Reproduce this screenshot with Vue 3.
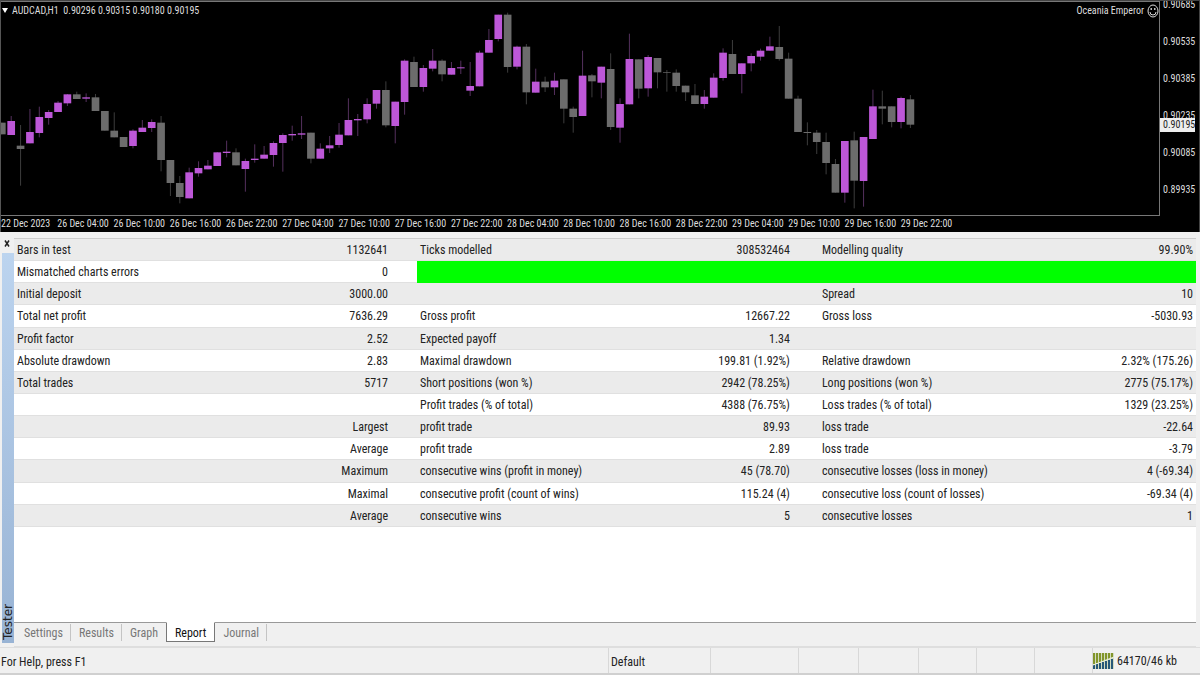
<script setup>
// Candle rows: direction (u/d), wick top, body top, body bottom, wick bottom
const source = `d 368 368 403 403|u 348 363 405 405|d 375 437 447 557|u 327 396 430 430|u 320 351 399 412|u 330 336 354 374|u 303 308 336 336|u 282 283 310 318|d 275 283 297 297|u 280 292 296 306|d 282 292 333 333|d 333 333 392 392|d 337 392 412 412|d 411 411 441 441|u 388 392 438 445|u 360 383 396 396|u 358 366 384 396|d 348 368 480 514|d 480 480 549 588|d 528 549 591 610|u 503 517 595 595|u 484 504 520 530|u 480 497 508 508|u 456 457 498 498|u 422 455 459 472|d 445 457 496 496|u 476 483 507 575|u 433 476 480 488|u 438 464 476 476|u 424 429 465 500|u 400 405 429 515|u 377 402 406 422|u 348 400 404 417|d 398 398 476 490|u 430 446 476 476|u 408 436 445 459|u 369 404 435 443|u 295 360 406 406|u 342 357 361 408|u 295 312 358 370|u 270 270 311 326|d 244 270 376 382|u 305 305 378 430|u 178 182 306 344|d 170 186 261 261|u 195 204 261 275|u 147 182 206 214|d 178 182 223 244|u 186 204 224 224|u 182 202 205 222|u 186 258 272 288|u 152 158 259 259|u 87 120 158 158|u 44 44 117 124|d 38 44 201 218|u 137 140 200 208|d 132 140 277 313|u 206 245 278 278|d 230 245 262 276|u 218 242 262 285|d 238 238 326 370|d 320 326 351 398|u 152 227 348 348|d 222 226 244 292|u 200 200 248 295|d 160 207 381 390|u 295 312 383 428|u 101 177 313 313|d 178 178 266 295|u 165 171 265 290|d 174 174 217 265|d 210 216 218 275|d 208 218 258 275|d 257 257 277 303|d 252 286 312 312|u 270 290 312 326|u 220 233 293 293|u 145 158 234 242|d 120 162 222 222|u 190 190 222 280|u 160 168 190 214|u 146 152 170 182|u 110 139 152 152|d 78 141 177 182|d 158 176 296 296|d 287 296 396 396|d 367 396 399 436|d 390 398 426 462|d 398 426 489 523|d 477 492 578 578|u 423 423 578 608|d 395 421 542 625|u 411 411 543 620|u 269 319 417 417|d 272 319 326 373|d 319 319 366 382|u 290 294 366 385|d 285 298 374 384`

const candles = source.split('|').map((row, i) => {
  const [dir, ...n] = row.split(' ')
  const [high, top, bottom, low] = n.map(Number)
  return { x: 5 + i * 28.1, dir, high, top, bottom, low }
})

const times = [
  '22 Dec 2023', '26 Dec 04:00', '26 Dec 10:00', '26 Dec 16:00', '26 Dec 22:00', '27 Dec 04:00',
  '27 Dec 10:00', '27 Dec 16:00', '27 Dec 22:00', '28 Dec 04:00', '28 Dec 10:00', '28 Dec 16:00',
  '28 Dec 22:00', '29 Dec 04:00', '29 Dec 10:00', '29 Dec 16:00', '29 Dec 22:00',
]
const prices = ['0.90685', '0.90535', '0.90385', '0.90235', '0.90085', '0.89935']

const rows = [
  ['Bars in test', '1132641', 'Ticks modelled', '308532464', 'Modelling quality', '99.90%'],
  ['Mismatched charts errors', '0'],
  ['Initial deposit', '3000.00', '', '', 'Spread', '10'],
  ['Total net profit', '7636.29', 'Gross profit', '12667.22', 'Gross loss', '-5030.93'],
  ['Profit factor', '2.52', 'Expected payoff', '1.34', '', ''],
  ['Absolute drawdown', '2.83', 'Maximal drawdown', '199.81 (1.92%)', 'Relative drawdown', '2.32% (175.26)'],
  ['Total trades', '5717', 'Short positions (won %)', '2942 (78.25%)', 'Long positions (won %)', '2775 (75.17%)'],
  ['', '', 'Profit trades (% of total)', '4388 (76.75%)', 'Loss trades (% of total)', '1329 (23.25%)'],
  ['', 'Largest', 'profit trade', '89.93', 'loss trade', '-22.64'],
  ['', 'Average', 'profit trade', '2.89', 'loss trade', '-3.79'],
  ['', 'Maximum', 'consecutive wins (profit in money)', '45 (78.70)', 'consecutive losses (loss in money)', '4 (-69.34)'],
  ['', 'Maximal', 'consecutive profit (count of wins)', '115.24 (4)', 'consecutive loss (count of losses)', '-69.34 (4)'],
  ['', 'Average', 'consecutive wins', '5', 'consecutive losses', '1'],
]
const tabs = ['Settings', 'Results', 'Graph', 'Report', 'Journal']
</script>

<template>
  <div class="terminal">
    <section class="chart">
      <div class="plot-row">
        <div class="plot">
          <svg class="candles" viewBox="3 6 3474 639" preserveAspectRatio="none">
            <g v-for="(c, i) in candles" :key="i" :class="c.dir">
              <rect class="wick" :x="c.x - 1" :y="c.high" width="3" :height="c.low - c.high" />
              <rect class="body" :x="c.x - 11" :y="c.top" width="23" :height="c.bottom - c.top" />
            </g>
          </svg>
          <header class="chart-head">
            <svg class="arrow" viewBox="0 0 6 5"><path d="M0 0h6L3 5z" fill="#fff" /></svg>
            <span>AUDCAD,H1&nbsp; 0.90296 0.90315 0.90180 0.90195</span>
            <span class="expert">Oceania Emperor</span>
            <svg class="smile" viewBox="0 0 12 14" fill="none" stroke="#ddd">
              <ellipse cx="6" cy="7" rx="5" ry="6" />
              <path d="M3 8q0 3 3 3t3-3" />
              <path d="M4.2 4v2M7.8 4v2" stroke-width="1.3" />
            </svg>
          </header>
        </div>
        <div class="scale">
          <span v-for="p in prices" :key="p" class="price">{{ p }}</span>
          <span class="current">0.90195</span>
        </div>
      </div>
      <div class="times"><span v-for="t in times" :key="t">{{ t }}</span></div>
    </section>

    <section class="tester">
      <aside class="rail">
        <button class="close" aria-label="Close">
          <svg viewBox="0 0 6 6"><path d="M1 0l4 6M5 0L1 6" stroke="#222" stroke-width="1.5" /></svg>
        </button>
        <div class="grip"><span>Tester</span></div>
      </aside>
      <div class="panel">
        <div class="report">
          <table>
            <colgroup><col class="c1"><col class="c2"><col class="c3"><col class="c4"><col class="c5"><col class="c6"></colgroup>
            <tbody>
              <tr v-for="(r, i) in rows" :key="i">
                <td v-for="(cell, j) in r" :key="j">{{ cell }}</td>
                <td v-if="r.length === 2" colspan="4" class="quality"></td>
              </tr>
            </tbody>
          </table>
        </div>
        <nav class="tabs">
          <button v-for="t in tabs" :key="t" :class="{ active: t === 'Report' }">{{ t }}</button>
          <i></i>
        </nav>
      </div>
    </section>

    <footer class="status">
      <span class="help">For Help, press F1</span>
      <span class="profile">Default</span>
      <span class="w88"></span><span class="w60"></span><span class="w60"></span><span class="w58"></span><span class="w58"></span><span class="w58"></span>
      <span class="traffic">
        <svg viewBox="0 0 21 16">
          <rect width="21" height="16" fill="#d3dbc0" />
          <g v-for="n in 7" :key="n">
            <rect :x="n * 3 - 3" y="0" width="2" :height="12 - n" fill="#82952a" />
            <rect :x="n * 3 - 3" :y="13 - n" width="2" :height="3 + n" fill="#275879" />
          </g>
          <path d="M0 12L21 4" stroke="#e9efdc" stroke-width="1" />
        </svg>
        64170/46 kb
      </span>
    </footer>
  </div>
</template>

<style>
body { background: #f0f0f0; }
</style>

<style scoped>
* { box-sizing: border-box; }
.terminal {
  display: flex; flex-direction: column; min-height: 100vh;
  font: 12px/20px "Roboto Condensed", Roboto, sans-serif; color: #222; background: #f0f0f0;
}
button { font: inherit; border: 0; background: none; padding: 0; margin: 0; }
.chart {
  background: #000; color: #ddd; font-size: 10px; line-height: 14px;
  border-top: 1px solid #444; border-left: 1px solid #555; border-right: 1px solid #444;
  height: 232px; display: flex; flex-direction: column;
}
.plot-row { display: flex; height: 215px; }
.plot { flex: 1; position: relative; border: solid #777; border-width: 1px 1px 1px 0; }
.candles { display: block; width: 100%; height: 213px; }
.d rect { fill: #6c6c6c; }
.u rect { fill: #bd57d8; }
.d .wick { fill: #3c3c3c; }
.u .wick { fill: #54305d; }
.chart-head { position: absolute; top: 0; left: 1px; right: 0; display: flex; align-items: center; height: 17px; }
.arrow { width: 6px; height: 5px; margin-right: 4px; }
.expert { margin-left: auto; }
.smile { width: 12px; height: 14px; margin-left: 3px; }
.scale { width: 39px; position: relative; display: flex; flex-direction: column; overflow: hidden; }
.price { flex: 0 0 37px; padding-left: 3px; line-height: 37px; }
.price:first-child { margin-top: -15px; }
.current { position: absolute; left: 0; top: 117px; width: 35px; line-height: 14px; padding-left: 3px; background: #eee; color: #222; }
.times { display: grid; grid-template-columns: repeat(17, 1fr); width: 79.8%; padding-top: 1px; white-space: nowrap; }
.tester { flex: 1; display: flex; padding-top: 6px; }
.rail { width: 14px; display: flex; flex-direction: column; }
.close { height: 11px; width: 13px; margin-bottom: 4px; display: flex; align-items: center; justify-content: center; }
.close svg { width: 6px; height: 7px; }
.grip { flex: 1; margin: 0 0 4px 2px; background: linear-gradient(#bcd4ef, #98b3d4); display: flex; align-items: flex-end; justify-content: center; }
.grip span { writing-mode: vertical-rl; transform: rotate(180deg); font: 12px/12px "DejaVu Sans", sans-serif; padding-top: 3px; }
.panel { flex: 1; display: flex; flex-direction: column; }
.report { flex: 1; background: #fff; border-top: 1px solid #ccc; margin-right: 4px; }
table { width: 100%; height: 288px; table-layout: fixed; border-collapse: collapse; }
.c1 { width: 20%; } .c2 { width: 14.1%; } .c3 { width: 20%; } .c4 { width: 14%; } .c5 { width: 20%; } .c6 { width: 11.9%; }
td { padding: 1px 3px 0; white-space: nowrap; border-bottom: 1px solid #e0e0e0; line-height: 20px; }
tr:nth-child(odd) { background: #ebebeb; }
td:nth-child(even) { text-align: right; padding-right: 29px; }
td:nth-child(6) { padding-right: 3px; }
td.quality { background: #0f0; border-color: #0f0; }
.tabs { display: flex; height: 25px; border-bottom: 1px solid #dedede; padding-bottom: 4px; margin-right: 4px; }
.tabs button { padding: 0 8px; border-top: 1px solid #999; color: #777; position: relative; }
.tabs button:first-child { padding-left: 10px; }
.tabs button:not(.active)::after { content: ""; position: absolute; right: 0; top: 1px; height: 17px; border-right: 1px solid #c4c4c4; }
.tabs button:nth-child(3)::after { display: none; }
.tabs .active { background: #fff; color: #111; border: 1px solid #777; border-top-color: #fff; }
.tabs i { flex: 1; border-top: 1px solid #999; }
.status { display: flex; height: 28px; line-height: 28px; border-top: 1px solid #dedede; border-bottom: 2px solid #d0d0d0; }
.status > span { height: 25px; border-left: 1px solid #d8d8d8; }
.status .help { flex: 1; border: 0; padding-left: 1px; }
.profile { width: 102px; padding-left: 2px; }
.w88 { width: 88px; } .w60 { width: 60px; } .w58 { width: 58px; }
.traffic { width: 108px; display: flex; align-items: center; gap: 3px; white-space: nowrap; }
.traffic svg { width: 21px; height: 16px; }
</style>
